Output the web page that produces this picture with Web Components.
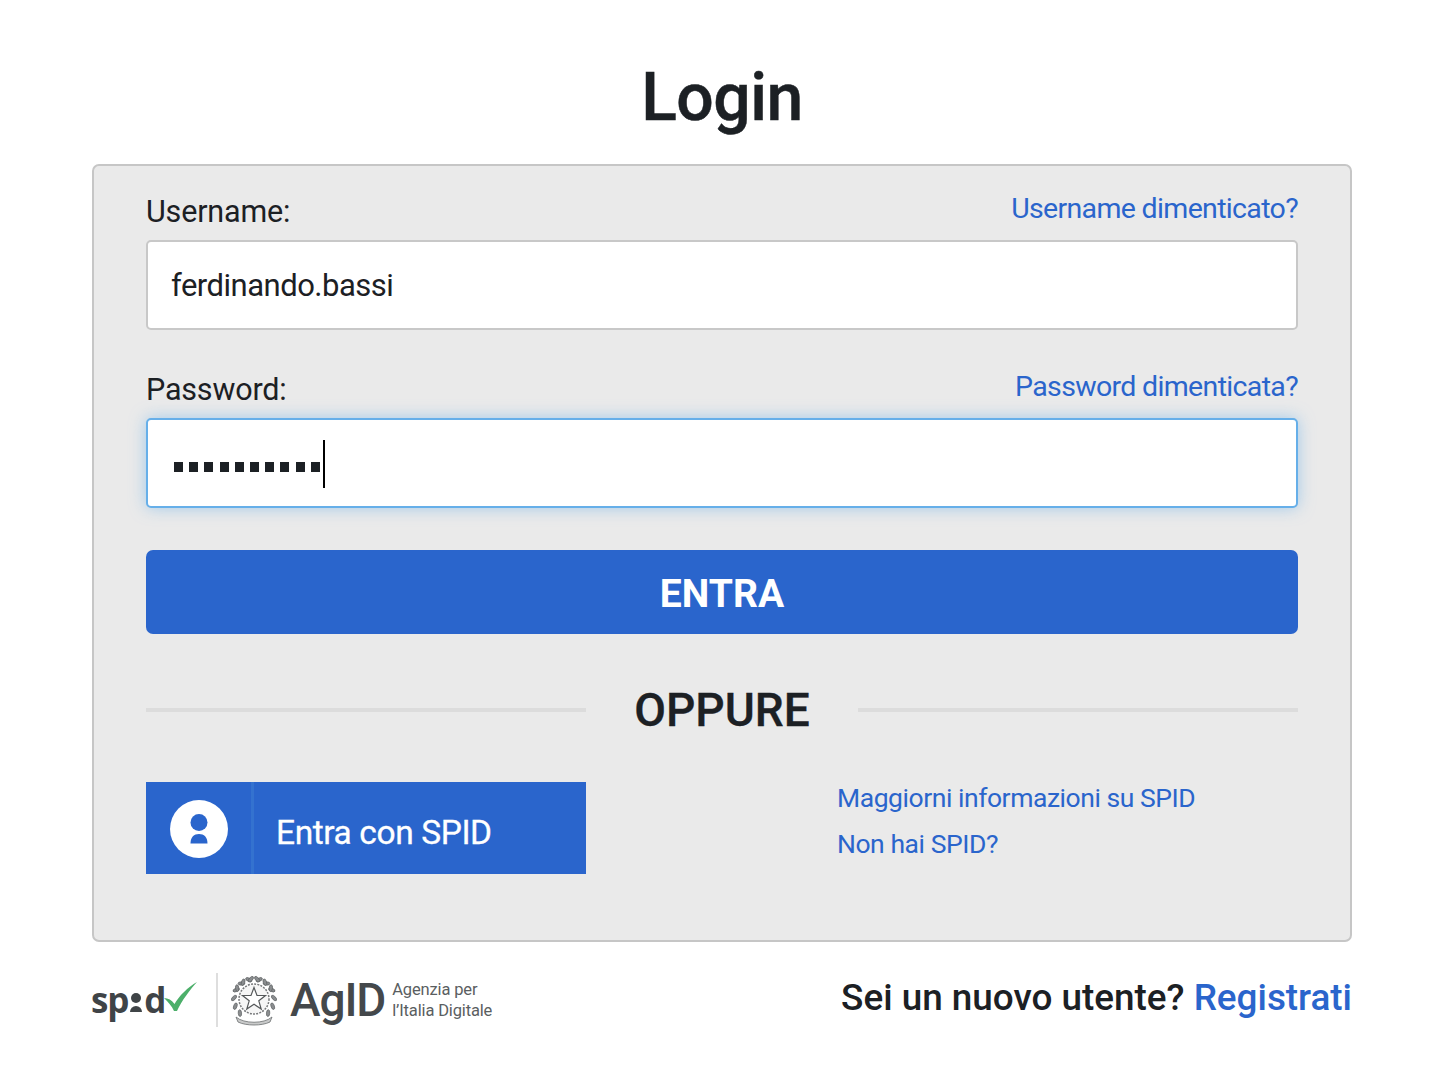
<!DOCTYPE html>
<html lang="it">
<head>
<meta charset="utf-8">
<title>Login</title>
<style>
html, body { margin: 0; background: #fff; }
body { font-family: Roboto, "Liberation Sans", sans-serif; color: #1c2024; }
</style>
</head>
<body>
<login-page>
	<login-field label="Username:" link="Username dimenticato?" value="ferdinando.bassi"></login-field>
	<login-field label="Password:" link="Password dimenticata?" dots="10" focused></login-field>
</login-page>
<script>
(function() {
	const FONT = 'Roboto, "Liberation Sans", sans-serif';
	const BLUE = "#2a65cc";

	class LoginField extends HTMLElement {
		constructor() {
			super();
			this.attachShadow({mode: "open"});
		}

		connectedCallback() {
			let count = parseInt(this.getAttribute("dots") || "0", 10);
			let content = this.getAttribute("value") || "";
			if (count) {
				content = '<span class="dots">' + '<i></i>'.repeat(count) + '</span><span class="caret"></span>';
			}
			this.shadowRoot.innerHTML = `
			<style>
			:host { display: block; }
			.top { display: flex; justify-content: space-between; align-items: flex-start; height: 74px; box-sizing: border-box; }
			label { font-size: 30.5px; line-height: 40px; padding-top: 26px; letter-spacing: -0.18px; }
			a { font-size: 28.5px; line-height: 36px; padding-top: 25px; color: ${BLUE}; text-decoration: none; letter-spacing: -0.66px; }
			.box {
				height: 90px; box-sizing: border-box; display: flex; align-items: center;
				padding: 0 23px; background: #fff; border: 2px solid #c8c8c8; border-radius: 5px;
				font-size: 31px; letter-spacing: -0.5px;
			}
			:host([focused]) .box { border-color: #66afe9; box-shadow: 0 0 16px rgba(102, 175, 233, .55); }
			.dots { display: flex; gap: 6.2px; margin-left: 3px; padding-top: 8px; }
			.dots i { display: block; width: 9px; height: 10px; background: #1c2024; }
			.caret { width: 2px; height: 48px; margin-left: 3px; margin-top: 2px; background: #000; }
			</style>
			<div class="top"><label>${this.getAttribute("label")}</label><a href="#">${this.getAttribute("link")}</a></div>
			<div class="box">${content}</div>`;
		}
	}
	customElements.define("login-field", LoginField);

	class SpidButton extends HTMLElement {
		constructor() {
			super();
			this.attachShadow({mode: "open"});
			this.shadowRoot.innerHTML = `
			<style>
			:host { display: flex; width: 440px; height: 92px; background: ${BLUE}; color: #fff; }
			.icon { width: 105px; display: flex; align-items: center; justify-content: center; box-sizing: border-box; padding-top: 2px; }
			.sep { width: 3px; background: #3472cf; }
			.text { padding-left: 22px; font-size: 33.5px; line-height: 102px; letter-spacing: -0.4px; white-space: nowrap; -webkit-text-stroke: 0.3px #fff; }
			</style>
			<div class="icon">
				<svg width="58" height="58" viewBox="0 0 58 58">
					<circle cx="29" cy="29" r="29" fill="#fff"/>
					<circle cx="29" cy="22.5" r="8.500" fill="${BLUE}"/>
					<path d="M20.500 43.500 C20.500 37 24 34 29 34 C34 34 37.500 37 37.500 43.500 Z" fill="${BLUE}"/>
				</svg>
			</div>
			<div class="sep"></div>
			<div class="text"><slot></slot></div>`;
		}
	}
	customElements.define("spid-button", SpidButton);

	class LogoStrip extends HTMLElement {
		constructor() {
			super();
			this.attachShadow({mode: "open"});
			// wreath leaves down each side of the emblem
			let leaves = "";
			for (let i = 0; i < 9; i++) {
				let deg = -135 + i * 24;
				let a = deg * Math.PI / 180;
				let x = 23 + 20 * Math.sin(a);
				let y = 25 - 20 * Math.cos(a);
				let x2 = 46 - x;
				leaves += `<ellipse cx="${x.toFixed(1)}" cy="${y.toFixed(1)}" rx="3.400" ry="1.700" transform="rotate(${deg + 40} ${x.toFixed(1)} ${y.toFixed(1)})" fill="#8a8d8f" stroke="#55585a" stroke-width=".6"/>`;
				leaves += `<ellipse cx="${x2.toFixed(1)}" cy="${y.toFixed(1)}" rx="3.400" ry="1.700" transform="rotate(${-deg - 40} ${x2.toFixed(1)} ${y.toFixed(1)})" fill="#8a8d8f" stroke="#55585a" stroke-width=".6"/>`;
			}
			this.shadowRoot.innerHTML = `
			<style>
			:host { display: flex; align-items: center; height: 54px; margin-top: 6px; color: #454a4d; }
			.spid { display: flex; align-items: center; width: 124px; position: relative; left: -1px; font-family: "Open Sans", sans-serif; font-weight: 700; font-size: 35px; letter-spacing: -1.2px; line-height: 54px; color: #3f4447; box-sizing: border-box; }
			.spid .dot { display: inline-flex; flex-direction: column; align-items: center; gap: 3px; width: 14px; margin: 5px 1px 0; }
			.spid .dot b { display: block; width: 10px; height: 10px; border-radius: 5px; background: #3f4447; }
			.spid .dot b + b { width: 12px; height: 6px; border-radius: 6px 6px 0 0; }
			.spid svg { position: absolute; left: 73px; top: 8px; }
			.rule { width: 2px; height: 54px; background: #dedede; }
			.emblem { margin-left: 13px; margin-right: 13px; }
			.agid { font-family: Roboto, sans-serif; font-size: 46px; font-weight: 500; letter-spacing: -1.1px; line-height: 54px; color: #44484b; }
			.name { margin-left: 7px; font-family: Roboto, sans-serif; font-size: 16.5px; line-height: 21px; color: #5a5e61; letter-spacing: -0.15px; white-space: nowrap; }
			</style>
			<div class="spid"><span>sp</span><span class="dot"><b></b><b></b></span><span>d</span>
				<svg width="34" height="30" viewBox="0 0 34 30"><path d="M0 17 C4 17 8 19 10.500 23 C15 15 24 6 33 1 C26 9 18 19 13 30 L10 30 C8 25 4 21 0 17 Z" fill="#4caf6a"/></svg>
			</div>
			<div class="rule"></div>
			<svg class="emblem" width="46" height="52" viewBox="0 0 46 52">
				${leaves}
				<circle cx="23" cy="25" r="15" fill="#f6f6f6" stroke="#77797b" stroke-width="1.500" stroke-dasharray="2 1.200"/>
				<path d="M23 13.500 L26 21.500 L34.500 21.500 L27.800 26.800 L30.200 35 L23 30.200 L15.800 35 L18.200 26.800 L11.500 21.500 L20 21.500 Z" fill="#fff" stroke="#55585a" stroke-width="1.200"/>
				<path d="M5 43 C13 50 33 50 41 43 L39 48 C31 52 15 52 7 48 Z" fill="#c9caca" stroke="#6b6e70" stroke-width=".8"/>
			</svg>
			<div class="agid">AgID</div>
			<div class="name">Agenzia per<br>l’Italia Digitale</div>`;
		}
	}
	customElements.define("logo-strip", LogoStrip);

	let template = document.createElement("template");
	template.innerHTML = `
	<style>
	:host { display: block; width: 1260px; margin: 0 auto; font-family: ${FONT}; color: #1c2024; }
	h1 { margin: 0; height: 164px; box-sizing: border-box; padding-top: 56px; text-align: center; font-size: 66px; line-height: 84px; font-weight: 500; letter-spacing: -0.5px; -webkit-text-stroke: 0.5px #1c2024; }
	.panel { box-sizing: border-box; height: 778px; padding: 0 52px; background: #eaeaea; border: 2px solid #c6c6c6; border-radius: 7px; }
	.fields { display: grid; row-gap: 14px; }
	button { display: block; width: 100%; height: 84px; margin-top: 42px; padding: 4px 0 0; border: 0; border-radius: 7px; background: ${BLUE}; color: #fff; font: 700 39px/80px ${FONT}; }
	.or { display: grid; grid-template-columns: 440px 1fr 440px; align-items: center; margin-top: 48px; height: 56px; }
	.or hr { height: 4px; margin: 0; border: 0; background: #dcdcdc; }
	.or span { text-align: center; font-size: 46px; font-weight: 500; line-height: 56px; -webkit-text-stroke: 0.3px #1c2024; }
	.spid-row { display: grid; grid-template-columns: 691px 1fr; margin-top: 44px; }
	.more { display: flex; flex-direction: column; gap: 12px; margin-top: -1px; }
	.more a { color: ${BLUE}; text-decoration: none; font-size: 26.5px; line-height: 34px; letter-spacing: -0.45px; }
	.foot { display: flex; justify-content: space-between; align-items: center; height: 110px; }
	.new { font-size: 36.9px; font-weight: 500; letter-spacing: -0.02px; }
	.new a { color: ${BLUE}; text-decoration: none; }
	</style>
	<h1>Login</h1>
	<div class="panel">
		<div class="fields"><slot></slot></div>
		<button type="button">ENTRA</button>
		<div class="or"><hr><span>OPPURE</span><hr></div>
		<div class="spid-row">
			<spid-button>Entra con SPID</spid-button>
			<div class="more">
				<a href="#">Maggiorni informazioni su SPID</a>
				<a href="#">Non hai SPID?</a>
			</div>
		</div>
	</div>
	<div class="foot">
		<logo-strip></logo-strip>
		<div class="new">Sei un nuovo utente? <a href="#">Registrati</a></div>
	</div>`;

	class LoginPage extends HTMLElement {
		constructor() {
			super();
			this.attachShadow({mode: "open"});
			this.shadowRoot.appendChild(template.content.cloneNode(true));
		}
	}
	customElements.define("login-page", LoginPage);
})();
</script>
</body>
</html>
